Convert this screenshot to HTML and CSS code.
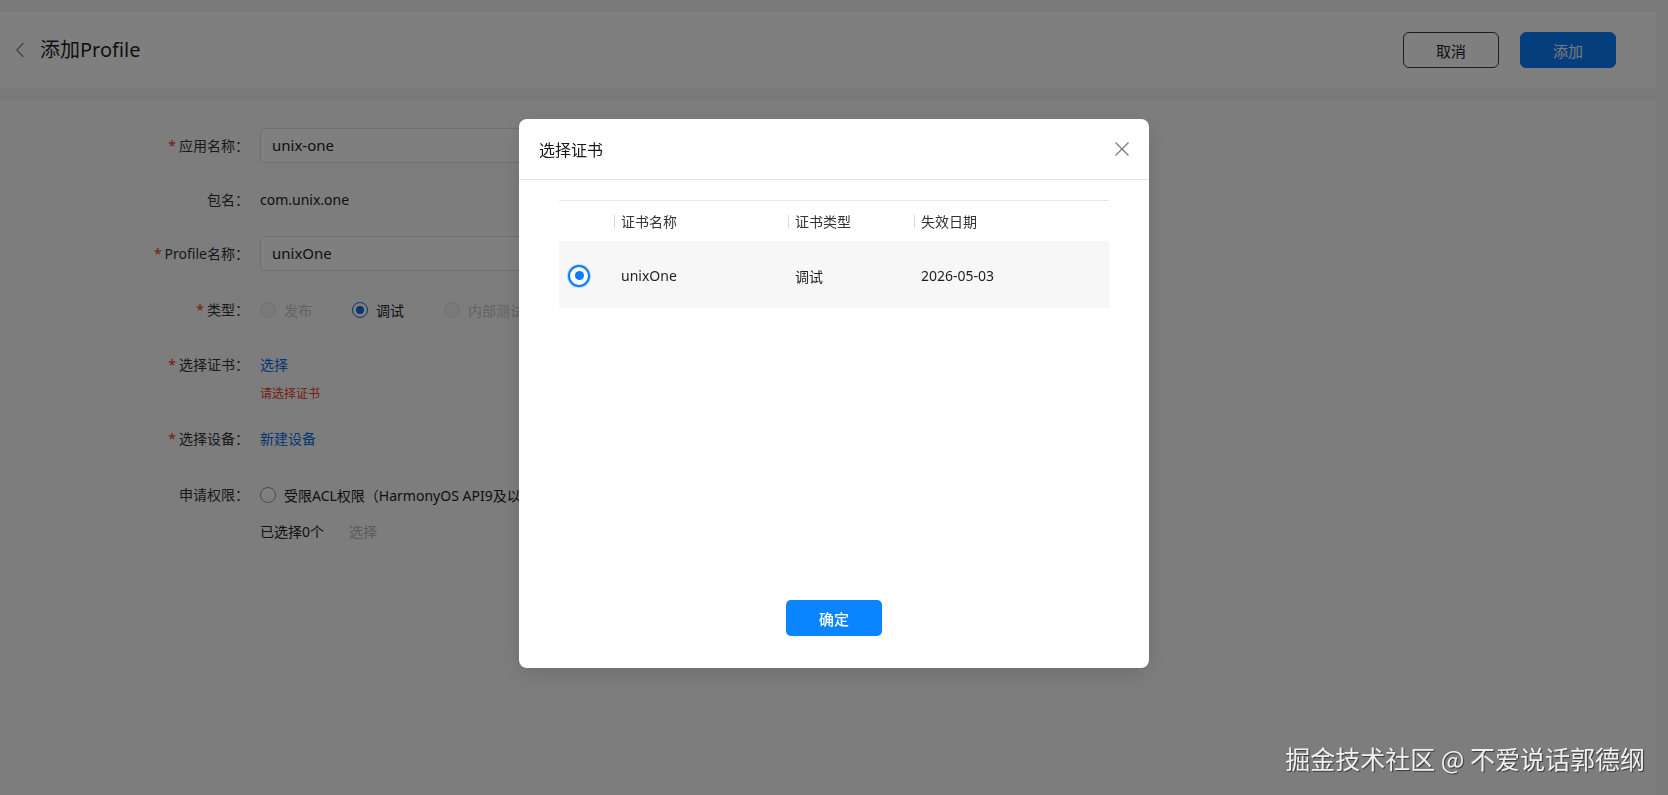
FILE: index.html
```html
<!DOCTYPE html>
<html lang="zh-CN">
<head>
<meta charset="utf-8">
<title>添加Profile</title>
<link rel="stylesheet" href="styles.css">
</head>
<body>
<div class="page">
  <header class="topbar">
    <div class="topbar-left">
      <svg class="back" width="10" height="16" viewBox="0 0 10 16"><path d="M8.5 1 L1.8 8 L8.5 15" fill="none" stroke="#8a8a8a" stroke-width="1.3"/></svg>
      <h1 class="title">添加Profile</h1>
    </div>
    <div class="topbar-actions">
      <button class="btn btn-ghost">取消</button>
      <button class="btn btn-primary">添加</button>
    </div>
  </header>

  <main class="content">
    <div class="row gap-19">
      <div class="label"><span class="req">*</span>应用名称：</div>
      <div class="field"><div class="input">unix-one</div></div>
    </div>
    <div class="row gap-19">
      <div class="label">包名：</div>
      <div class="field"><div class="value">com.unix.one</div></div>
    </div>
    <div class="row gap-21">
      <div class="label"><span class="req">*</span>Profile名称：</div>
      <div class="field"><div class="input">unixOne</div></div>
    </div>
    <div class="row gap-20">
      <div class="label"><span class="req">*</span>类型：</div>
      <div class="field">
        <div class="radios">
          <span class="radio-item disabled"><span class="radio"></span>发布</span>
          <span class="radio-item"><span class="radio checked"></span>调试</span>
          <span class="radio-item disabled"><span class="radio"></span>内部测试</span>
        </div>
      </div>
    </div>
    <div class="row gap-17">
      <div class="label"><span class="req">*</span>选择证书：</div>
      <div class="field">
        <div class="value"><span class="link">选择</span></div>
        <div class="error">请选择证书</div>
      </div>
    </div>
    <div class="row gap-21">
      <div class="label"><span class="req">*</span>选择设备：</div>
      <div class="field"><div class="value"><span class="link">新建设备</span></div></div>
    </div>
    <div class="row">
      <div class="label">申请权限：</div>
      <div class="field">
        <div class="radios">
          <span class="radio-item"><span class="radio"></span>受限ACL权限（HarmonyOS API9及以上）</span>
        </div>
        <div class="selected-line"><span>已选择0个</span><span class="muted">选择</span></div>
      </div>
    </div>
  </main>
</div>

<div class="mask">
  <div class="dialog">
    <div class="dialog-head">
      <span class="dialog-title">选择证书</span>
      <svg class="close" width="14" height="14" viewBox="0 0 14 14"><path d="M0.5 0.5 L13.5 13.5 M13.5 0.5 L0.5 13.5" stroke="#777" stroke-width="1.2" fill="none"/></svg>
    </div>
    <div class="dialog-body">
      <div class="table">
        <div class="tr thead">
          <div class="td td-radio"></div>
          <div class="td sep">证书名称</div>
          <div class="td sep">证书类型</div>
          <div class="td sep">失效日期</div>
        </div>
        <div class="tr tbody-row">
          <div class="td td-radio"><span class="big-radio"></span></div>
          <div class="td">unixOne</div>
          <div class="td">调试</div>
          <div class="td">2026-05-03</div>
        </div>
      </div>
    </div>
    <div class="dialog-foot">
      <button class="btn btn-confirm">确定</button>
    </div>
  </div>
</div>

<div class="watermark">掘金技术社区 @ 不爱说话郭德纲</div>
</body>
</html>
```

FILE: styles.css
```css
* { box-sizing: border-box; }

html, body {
  margin: 0;
  padding: 0;
  height: 100%;
}

body {
  font-family: "Noto Sans", "Noto Sans CJK SC", sans-serif;
  font-size: 14px;
  color: #333;
  background: #f2f2f2;
  overflow: hidden;
}

.page {
  padding-top: 12px;
  height: 100%;
  display: flex;
  flex-direction: column;
}

.topbar {
  flex: 0 0 76px;
  height: 76px;
  margin-right: 12px;
  background: #ffffff;
  display: flex;
  align-items: center;
  justify-content: space-between;
  padding: 0 40px 0 15px;
}

.topbar-left {
  display: flex;
  align-items: center;
}

.back {
  display: block;
  margin-right: 15px;
}

.title {
  margin: 0;
  font-size: 20px;
  font-weight: 400;
  color: #1f1f1f;
  line-height: 28px;
}

.topbar-actions {
  display: flex;
  gap: 21px;
}

.btn {
  font-family: "Noto Sans", "Noto Sans CJK SC", sans-serif;
  width: 96px;
  height: 36px;
  border-radius: 6px;
  font-size: 15px;
  padding: 0;
  cursor: pointer;
}

.btn-ghost {
  background: #fff;
  border: 1px solid #3a3a3a;
  color: #222;
}

.btn-primary {
  background: #0a7dfa;
  border: 1px solid #0a7dfa;
  color: #f2f6fb;
}

.content {
  flex: 1;
  margin-top: 12px;
  margin-right: 12px;
  background: #fafafa;
  padding: 28px 0 0 130px;
}

.row {
  display: flex;
  align-items: flex-start;
  gap: 11px;
  margin-bottom: 20px;
}

.row.gap-17 { margin-bottom: 17px; }
.row.gap-19 { margin-bottom: 19px; }
.row.gap-20 { margin-bottom: 20px; }
.row.gap-21 { margin-bottom: 21px; }

.label {
  width: 119px;
  text-align: right;
  line-height: 35px;
  color: #333;
  white-space: nowrap;
}

.req {
  color: #e84026;
  margin-right: 3px;
}

.field {
  display: flex;
  flex-direction: column;
}

.input {
  width: 420px;
  height: 35px;
  border: 1px solid #dedede;
  border-radius: 4px;
  background: #fff;
  padding: 0 11px;
  line-height: 33px;
  font-size: 15px;
  color: #222;
}

.value {
  line-height: 35px;
  font-size: 14px;
  color: #222;
}

.link {
  color: #0a6ee8;
}

.error {
  font-size: 12px;
  line-height: 20px;
  margin-top: 2px;
  color: #e84026;
}

.radios {
  display: flex;
  align-items: center;
  height: 35px;
  gap: 40px;
}

.radio-item {
  display: flex;
  align-items: center;
  gap: 8px;
  color: #222;
  white-space: nowrap;
  font-size: 14px;
}

.radio-item.disabled {
  color: #c6c6c6;
}

.radio {
  width: 16px;
  height: 16px;
  border-radius: 50%;
  border: 1px solid #9a9a9a;
  background: #fff;
  display: inline-flex;
  align-items: center;
  justify-content: center;
}

.radio-item.disabled .radio {
  border-color: #e3e3e3;
  background: #f3f3f3;
}

.radio.checked {
  border: 1.5px solid #0a6ee8;
}

.radio.checked::after {
  content: "";
  width: 8px;
  height: 8px;
  border-radius: 50%;
  background: #0a6ee8;
}

.selected-line {
  display: flex;
  gap: 25px;
  margin-top: 1px;
  line-height: 38px;
  color: #222;
}

.muted {
  color: #b9b9b9;
}

/* mask & dialog */
.mask {
  position: fixed;
  inset: 0;
  background: rgba(0, 0, 0, 0.5);
  display: flex;
  justify-content: center;
  align-items: flex-start;
  padding-top: 119px;
}

.dialog {
  width: 630px;
  height: 549px;
  background: #fff;
  border-radius: 8px;
  display: flex;
  flex-direction: column;
  box-shadow: 0 6px 20px rgba(0, 0, 0, 0.12);
}

.dialog-head {
  height: 61px;
  padding: 0 20px;
  display: flex;
  align-items: center;
  justify-content: space-between;
  border-bottom: 1px solid #e6e6e6;
}

.dialog-title {
  font-size: 16px;
  color: #191919;
}

.close {
  display: block;
}

.dialog-body {
  flex: 1;
  padding: 20px 40px 0;
}

.table {
  border-top: 1px solid #e6e6e6;
}

.tr {
  display: grid;
  grid-template-columns: 55px 174px 126px 1fr;
  align-items: center;
}

.thead {
  height: 40px;
  color: #333;
}

.tbody-row {
  height: 67px;
  background: #f7f7f7;
  color: #222;
  padding-top: 2px;
}

.td {
  position: relative;
  padding-left: 7px;
  font-size: 14px;
  white-space: nowrap;
}

.td.sep::before {
  content: "";
  position: absolute;
  left: 0;
  top: 50%;
  width: 1px;
  height: 13px;
  margin-top: -6px;
  background: #d9d9d9;
}

.td-radio {
  padding-left: 9px;
  display: flex;
  align-items: center;
}

.big-radio {
  width: 22px;
  height: 22px;
  border-radius: 50%;
  border: 2.5px solid #0a7dfa;
  background: #fff;
  display: inline-flex;
  align-items: center;
  justify-content: center;
  box-shadow: 0 0 0 1px rgba(10, 125, 250, 0.25);
}

.big-radio::after {
  content: "";
  width: 9px;
  height: 9px;
  border-radius: 50%;
  background: #0a7dfa;
}

.dialog-foot {
  display: flex;
  justify-content: center;
  padding-bottom: 32px;
}

.btn-confirm {
  background: #0a84ff;
  border: none;
  border-radius: 5px;
  color: #fff;
  font-weight: 500;
  font-size: 15px;
}

.watermark {
  position: fixed;
  right: 23px;
  bottom: 23px;
  font-family: "Noto Sans CJK SC", sans-serif;
  font-size: 25px;
  line-height: 28px;
  color: #f0f0f0;
  text-shadow: 1px 1px 1px rgba(0, 0, 0, 0.55);
  white-space: nowrap;
}
```
